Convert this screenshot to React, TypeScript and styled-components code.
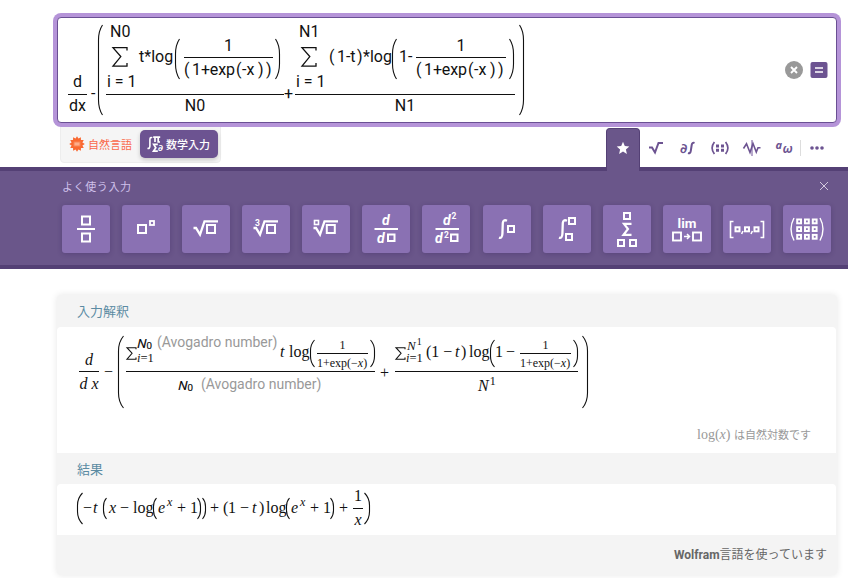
import React from "react";
import styled, { createGlobalStyle, css } from "styled-components";

const GlobalStyle = createGlobalStyle`
  * { box-sizing: border-box; }
  html, body { margin: 0; padding: 0; background: #fff; overflow: hidden; }
  body { font-family: Roboto, "Noto Sans CJK JP", sans-serif; color: #111; }
`;

const Page = styled.main`
  width: 848px;
  height: 578px;
  overflow: hidden;
  display: flex;
  flex-direction: column;
`;

/* ---------- query field ---------- */

const QueryBox = styled.section`
  position: relative;
  z-index: 2;
  flex: none;
  display: flex;
  justify-content: space-between;
  width: 780px;
  height: 106px;
  margin: 17px 0 0 57px;
  padding-right: 8px;
  border: 1px solid #6a4f93;
  border-radius: 4px;
  background: #fff;
  box-shadow: 0 0 0 4px #b594d8;
`;

const QueryMath = styled.div`
  display: flex;
  align-items: flex-start;
  padding: 3px 0 0 10px;
  font: 16px/20px Roboto, sans-serif;
`;

const QueryActions = styled.div`
  display: flex;
  align-items: center;
  gap: 7px;
`;

/* ---------- formula building blocks ---------- */

const Line = styled.div`
  display: flex;
  align-items: flex-start;
`;

const Stack = styled.div<{ $w?: number; $top?: number; $left?: number }>`
  flex: none;
  display: flex;
  flex-direction: column;
  width: ${(p) => (p.$w === undefined ? "auto" : `${p.$w}px`)};
  margin-top: ${(p) => p.$top ?? 0}px;
  margin-left: ${(p) => p.$left ?? 0}px;
`;

const Term = styled.span<{
  $w?: number;
  $top?: number;
  $left?: number;
  $size?: number;
  $italic?: boolean;
  $center?: boolean;
  $gap?: number;
}>`
  flex: none;
  display: block;
  white-space: pre;
  height: 20px;
  width: ${(p) => (p.$w === undefined ? "auto" : `${p.$w}px`)};
  margin-top: ${(p) => p.$top ?? 0}px;
  margin-left: ${(p) => p.$left ?? 0}px;
  letter-spacing: ${(p) => p.$gap ?? 0}px;
  ${(p) => p.$size && css`font-size: ${p.$size}px;`}
  ${(p) => p.$italic && css`font-style: italic;`}
  ${(p) => p.$center && css`text-align: center;`}
`;

const Bar = styled.div<{ $top?: number }>`
  height: 1px;
  margin-top: ${(p) => p.$top ?? 0}px;
  background: #111;
`;

const Unit = styled.span<{ $w: number; $top?: number; $left?: number }>`
  flex: none;
  white-space: pre;
  width: ${(p) => p.$w}px;
  height: 20px;
  margin-top: ${(p) => p.$top ?? 0}px;
  margin-left: ${(p) => p.$left ?? 0}px;
  font: 14px/20px Roboto, sans-serif;
  color: #999;
`;

const Constant = styled.span<{ $left?: number; $top?: number; $w: number }>`
  flex: none;
  display: flex;
  width: ${(p) => p.$w}px;
  height: 20px;
  margin-left: ${(p) => p.$left ?? 0}px;
  margin-top: ${(p) => p.$top ?? 0}px;
  font: italic 500 13.5px/20px "Open Sans", sans-serif;
  color: #000;
  -webkit-text-stroke: 0.2px #000;
`;

const ConstantSub = styled.span`
  font-size: 9.5px;
  font-style: normal;
  line-height: 26px;
`;

const SvgBlock = styled.svg<{ $top?: number; $left?: number }>`
  display: block;
  flex: none;
  overflow: visible;
  margin-top: ${(p) => p.$top ?? 0}px;
  margin-left: ${(p) => p.$left ?? 0}px;
`;

type ParenProps = { h: number; w?: number; top?: number; left?: number; close?: boolean };

function Paren({ h, w = 5, top, left, close }: ParenProps) {
  const c = Math.min(h * 0.4, 15);
  const d = close
    ? `M0.5 0 Q${w - 0.5} ${c * 0.4} ${w - 0.5} ${c} V${h - c} Q${w - 0.5} ${h - c * 0.4} 0.5 ${h}`
    : `M${w - 0.5} 0 Q0.5 ${c * 0.4} 0.5 ${c} V${h - c} Q0.5 ${h - c * 0.4} ${w - 0.5} ${h}`;
  return (
    <SvgBlock $top={top} $left={left} width={w} height={h}>
      <path d={d} fill="none" stroke="#111" strokeWidth="1.1" />
    </SvgBlock>
  );
}

function Sigma({ w, h, top, left, s = 1.3 }: { w: number; h: number; top?: number; left?: number; s?: number }) {
  return (
    <SvgBlock $top={top} $left={left} width={w} height={h}>
      <path
        d={`M${w - 1} ${h * 0.18} V0.7 H1 L${w * 0.55} ${h * 0.48} L1 ${h - 0.8} H${w - 1} V${h * 0.8}`}
        fill="none"
        stroke="#111"
        strokeWidth={s}
      />
    </SvgBlock>
  );
}

function SumColumn({ top, w }: { top: string; w: number }) {
  return (
    <Stack $w={w}>
      <Term $left={4} $top={1}>{top}</Term>
      <Sigma w={16} h={20} top={5} left={6} />
      <Term $left={1} $top={5}>i = 1</Term>
    </Stack>
  );
}

function Exponential({ w }: { w: number }) {
  return (
    <Stack $w={w} $top={15}>
      <Term $center>1</Term>
      <Bar $top={1} />
      <Line>
        <Term $w={8} $top={2}>(</Term>
        <Term $w={44} $top={2} $gap={-0.1}>1+exp</Term>
        <Term $w={6} $top={2}>(</Term>
        <Term $w={16} $top={2}>-x</Term>
        <Term $w={8} $top={2}>)</Term>
        <Term $top={2}>)</Term>
      </Line>
    </Stack>
  );
}

function QueryFormula() {
  return (
    <QueryMath>
      <Stack $w={19} $top={51}>
        <Term $center>d</Term>
        <Bar $top={2} />
        <Term $center $top={1}>dx</Term>
      </Stack>
      <Term $w={11} $left={4} $top={63}>-</Term>
      <Paren h={90} w={5} top={4} left={-4} />
      <Stack $w={178} $left={3}>
        <Line>
          <SumColumn top="N0" w={33} />
          <Term $w={36} $top={26}>t*log</Term>
          <Paren h={40} top={18} />
          <Stack $w={4} />
          <Exponential w={89} />
          <Paren h={40} top={18} left={2} close />
        </Line>
        <Bar $top={2} />
        <Term $center $top={1}>N0</Term>
      </Stack>
      <Term $w={11} $top={63}>+</Term>
      <Stack $w={220}>
        <Line>
          <SumColumn top="N1" w={34} />
          <Term $w={8} $top={26}>(</Term>
          <Term $w={20} $top={26} $gap={-0.1}>1-t</Term>
          <Term $w={6} $top={26}>)</Term>
          <Term $w={29} $top={26}>*log</Term>
          <Paren h={40} top={18} />
          <Term $w={17} $left={2} $top={26}>1-</Term>
          <Exponential w={90} />
          <Paren h={40} top={18} left={3} close />
        </Line>
        <Bar $top={2} />
        <Term $center $top={1}>N1</Term>
      </Stack>
      <Paren h={90} w={5} top={4} left={4} close />
    </QueryMath>
  );
}

/* ---------- mode switch and palette tabs ---------- */

const ControlRow = styled.div`
  flex: none;
  display: flex;
  justify-content: space-between;
  width: 848px;
  height: 44px;
  padding-left: 60px;
`;

const ModeSwitch = styled.div`
  display: flex;
  align-items: center;
  width: 161px;
  height: 40px;
  padding: 1px 2px 0 8px;
  background: #f5f5f5;
  border: 1px solid #ededed;
  border-radius: 4px;
  font-size: 11px;
`;

const NaturalMode = styled.button`
  display: flex;
  align-items: center;
  gap: 3px;
  width: 71px;
  padding: 0;
  border: 0;
  background: none;
  color: #fa694b;
  font: 11px "Noto Sans CJK JP", sans-serif;
  white-space: nowrap;
`;

const MathMode = styled.button`
  flex: none;
  display: flex;
  align-items: center;
  gap: 2px;
  width: 78px;
  height: 28px;
  padding: 0 0 0 7px;
  border: 0;
  border-radius: 5px;
  background: #6c5391;
  color: #fff;
  font: 500 11px "Noto Sans CJK JP", sans-serif;
  white-space: nowrap;
  box-shadow: 0 2px 4px rgba(0, 0, 0, 0.18);
`;

const Tabs = styled.nav`
  display: flex;
  align-items: flex-start;
  width: 242px;
  padding-top: 5px;
`;

const Tab = styled.button<{ $active?: boolean }>`
  display: flex;
  align-items: center;
  justify-content: center;
  width: 32px;
  height: 40px;
  padding: 0;
  border: 0;
  background: none;
  ${(p) =>
    p.$active &&
    css`
      position: relative;
      z-index: 1;
      width: 34px;
      height: 43px;
      padding-bottom: 5px;
      background: #6a568a;
      border: 1px solid #544075;
      border-bottom: 0;
      border-radius: 4px 4px 0 0;
    `}
`;

const TabDivider = styled.span`
  width: 1px;
  height: 16px;
  margin-top: 12px;
  background: #ddd;
`;

/* ---------- palette ---------- */

const Palette = styled.section`
  flex: none;
  width: 848px;
  height: 102px;
  padding: 0 17px 0 62px;
  background: #6a568a;
  border-top: 4px solid #544075;
  border-bottom: 4px solid #544075;
`;

const PaletteHead = styled.div`
  display: flex;
  align-items: center;
  justify-content: space-between;
  height: 34px;
  padding: 0 2px 4px 0;
  color: #cfc0ea;
  font: 11px "Noto Sans CJK JP", sans-serif;
  letter-spacing: 0.6px;
`;

const PaletteKeys = styled.div`
  display: flex;
  justify-content: space-between;
`;

const Key = styled.button`
  width: 48px;
  height: 48px;
  padding: 0;
  border: 0;
  border-radius: 3px;
  background: #8a71b3;
  box-shadow: 0 1px 5px rgba(40, 20, 80, 0.25);
`;

const KeyArt = styled.svg`
  display: block;
  width: 48px;
  height: 48px;
  fill: none;
  stroke: #fff;
  stroke-width: 2;
  text {
    fill: #fff;
    stroke: none;
    font-family: Roboto, sans-serif;
    font-weight: 700;
  }
`;

function Slot({ x, y, s = 8, w = 2 }: { x: number; y: number; s?: number; w?: number }) {
  return <rect x={x} y={y} width={s} height={s} strokeWidth={w} />;
}

const INTEGRAL = "M24 15.8 Q20.3 14 19.8 18 L19.4 29 Q19 33.8 16 32.6";
const RADICAL = "M11.5 23H14L18 29.5L22.5 16.3H36";

const keys: { name: string; art: React.ReactNode }[] = [
  { name: "fraction", art: <><Slot x={20} y={11.5} /><path d="M15 24H33" /><Slot x={20} y={28.5} /></> },
  { name: "power", art: <><Slot x={16} y={20} /><Slot x={28} y={16} s={4} w={1.8} /></> },
  { name: "square root", art: <><path d={RADICAL} strokeWidth="2.3" /><Slot x={25} y={20} /></> },
  { name: "cube root", art: <><path d={RADICAL} strokeWidth="2.3" /><Slot x={25} y={20} /><text x="13" y="20.5" fontSize="8.5">3</text></> },
  { name: "nth root", art: <><path d={RADICAL} strokeWidth="2.3" /><Slot x={24.8} y={20} /><Slot x={12.5} y={15.5} s={4} w={1.6} /></> },
  { name: "derivative", art: <><text x="20" y="19.8" fontSize="14" fontStyle="italic">d</text><path d="M12.5 24H36" /><text x="15" y="38.3" fontSize="14" fontStyle="italic">d</text><Slot x={26} y={29.5} s={6.5} /></> },
  { name: "second derivative", art: <><text x="21" y="19.8" fontSize="14" fontStyle="italic">d</text><text x="29.5" y="14" fontSize="8.5">2</text><path d="M13.5 24H37" /><text x="13" y="38.3" fontSize="14" fontStyle="italic">d</text><text x="22" y="32.5" fontSize="8.5">2</text><Slot x={29} y={29.5} s={6.5} /></> },
  { name: "integral", art: <><path d={INTEGRAL} strokeWidth="2.3" /><Slot x={25} y={21} s={6} /></> },
  { name: "definite integral", art: <><path d={INTEGRAL} strokeWidth="2.3" /><Slot x={26} y={13} s={6} /><Slot x={23} y={29} s={6} /></> },
  { name: "sum", art: <><Slot x={21} y={8} s={6} /><path d="M28.5 18.8H21L25 24L20.5 29.8H28.5" strokeWidth="2.2" /><Slot x={15} y={35} s={6} /><Slot x={27} y={35} s={6} /></> },
  { name: "limit", art: <><text x="14.6" y="22.5" fontSize="13.5">lim</text><Slot x={10} y={27.5} s={8} w={1.9} /><path d="M21 31.5H26M24 29L26.5 31.5L24 34" strokeWidth="1.5" /><Slot x={30} y={27.5} s={8} w={1.9} /></> },
  { name: "list", art: <><path d="M10.5 16.5H7.5V32.5H10.5M37.5 16.5H40.5V32.5H37.5" strokeWidth="1.6" />{[12.5, 22, 31.5].map((x) => <Slot key={x} x={x} y={22.3} s={4} />)}<path d="M20 26L18.6 29M29.4 26L28 29" strokeWidth="1.6" /></> },
  { name: "matrix", art: <><path d="M11 13Q5 24 11 35.5M37 13Q43 24 37 35.5" strokeWidth="1.4" />{[14.2, 22, 29.8].flatMap((x) => [14.5, 22.2, 29.9].map((y) => <Slot key={`${x}-${y}`} x={x} y={y} s={3.8} />))}</> },
];

/* ---------- results ---------- */

const Results = styled.section`
  flex: none;
  width: 780px;
  height: 280px;
  margin: 26px 0 0 57px;
  border-radius: 4px;
  background: #f4f4f4;
  box-shadow: 0 0 7px rgba(0, 0, 0, 0.1);
`;

const PodTitle = styled.h2<{ $h: number }>`
  display: flex;
  align-items: center;
  height: ${(p) => p.$h}px;
  margin: 0;
  padding: 0 0 0 20px;
  color: #5b8ba3;
  font: 400 13px/20px "Noto Sans CJK JP", sans-serif;
`;

const PodBody = styled.div<{ $h: number }>`
  display: flex;
  flex-direction: column;
  justify-content: space-between;
  height: ${(p) => p.$h}px;
  width: 779px;
  background: #fff;
  border-radius: 4px 4px 0 0;
`;

const SerifMath = styled.div`
  display: flex;
  align-items: flex-start;
  padding-left: 20px;
  font: 16px/20px "Liberation Serif", serif;
`;

const Footnote = styled.p`
  margin: 0 25px 9px auto;
  color: #999;
  font: 11px/18px "Noto Sans CJK JP", sans-serif;
  white-space: pre;
`;

const FootnoteMath = styled.span`
  font: 14px/18px "Liberation Serif", serif;
`;

const Credit = styled.footer`
  display: flex;
  justify-content: flex-end;
  align-items: center;
  height: 40px;
  padding: 0 10px 0 0;
  color: #666;
  font: 12px/20px Roboto, "Noto Sans CJK JP", sans-serif;
`;

function SmallExponential({ w, left }: { w: number; left?: number }) {
  return (
    <Stack $w={w} $left={left} $top={8}>
      <Term $center $size={12}>1</Term>
      <Bar $top={-2} />
      <Line>
        <Term $size={12} $top={-1}>1+exp(−</Term>
        <Term $size={12} $top={-1} $italic>x</Term>
        <Term $size={12} $top={-1}>)</Term>
      </Line>
    </Stack>
  );
}

function Interpretation() {
  return (
    <SerifMath>
      <Stack $w={20} $top={23} $left={2}>
        <Term $center $italic>d</Term>
        <Bar $top={1} />
        <Term $center $italic $top={2}>d x</Term>
      </Stack>
      <Term $w={10} $left={5} $top={35}>−</Term>
      <Paren h={72} w={6} top={9} left={4} />
      <Stack $w={249} $left={2}>
        <Line>
          <Sigma w={11} h={13} top={20} s={1.1} />
          <Stack $w={20}>
            <Constant $w={20} $top={6}>N<ConstantSub>0</ConstantSub></Constant>
            <Line>
              <Term $italic $size={12.5} $top={-5}>i</Term>
              <Term $size={12.5} $top={-5}>=1</Term>
            </Line>
          </Stack>
          <Unit $w={123} $top={5}>(Avogadro number)</Unit>
          <Term $italic $w={9} $top={15}>t</Term>
          <Term $w={21} $top={15}>log</Term>
          <Paren h={27} top={13} />
          <SmallExponential w={51} left={2} />
          <Paren h={27} top={13} left={2} close />
        </Line>
        <Bar $top={-2} />
        <Line>
          <Constant $w={23} $left={52} $top={3}>N<ConstantSub>0</ConstantSub></Constant>
          <Unit $w={124} $top={2}>(Avogadro number)</Unit>
        </Line>
      </Stack>
      <Term $w={15} $left={5} $top={36}>+</Term>
      <Stack $w={183}>
        <Line>
          <Sigma w={11} h={13} top={20} s={1.1} />
          <Stack $w={20}>
            <Line>
              <Term $italic $size={13} $left={1} $top={9}>N</Term>
              <Term $size={10} $left={1} $top={5}>1</Term>
            </Line>
            <Line>
              <Term $italic $size={12.5} $top={-8}>i</Term>
              <Term $size={12.5} $top={-8}>=1</Term>
            </Line>
          </Stack>
          <Term $w={29} $top={15}>(1 −</Term>
          <Term $w={6} $top={15} $italic>t</Term>
          <Term $w={8} $top={15}>)</Term>
          <Term $w={21} $top={15}>log</Term>
          <Paren h={27} top={13} />
          <Term $w={11} $top={15}>1</Term>
          <Term $w={14} $top={15}>−</Term>
          <SmallExponential w={51} />
          <Paren h={27} top={13} left={2} close />
        </Line>
        <Bar $top={-2} />
        <Line>
          <Term $italic $left={83} $top={4}>N</Term>
          <Term $size={12} $left={1} $top={-1}>1</Term>
        </Line>
      </Stack>
      <Paren h={72} w={6} top={9} left={4} close />
    </SerifMath>
  );
}

type Token = [text: string, width: number, kind?: "italic" | "power" | "open" | "close"];

const resultTokens: Token[] = [
  ["−", 10], ["t", 10, "italic"], ["(", 6, "open"], ["x", 11, "italic"], ["−", 13], ["log", 20], ["(", 5, "open"],
  ["e", 9, "italic"], ["x", 10, "power"], ["+", 13], ["1", 7], [")", 5, "close"], [")", 8, "close"], ["+", 13],
  ["(", 5], ["1", 12], ["−", 12], ["t", 7, "italic"], [")", 7], ["log", 20], ["(", 5, "open"],
  ["e", 9, "italic"], ["x", 10, "power"], ["+", 13], ["1", 7], [")", 9, "close"], ["+", 14],
];

function ResultFormula() {
  return (
    <SerifMath>
      <Paren h={31} w={6} top={9} />
      {resultTokens.map(([text, width, kind], i) =>
        kind === "open" || kind === "close" ? (
          <Stack key={i} $w={width} $top={14}>
            <Paren h={21} w={4} close={kind === "close"} />
          </Stack>
        ) : (
          <Term
            key={i}
            $w={width}
            $italic={kind !== undefined}
            $size={kind === "power" ? 12 : undefined}
            $top={kind === "power" ? 8 : 14}
          >
            {text}
          </Term>
        )
      )}
      <Stack $w={10} $top={2}>
        <Term $center>1</Term>
        <Bar $top={2} />
        <Term $center $italic $top={1}>x</Term>
      </Stack>
      <Paren h={31} w={6} top={9} left={1} close />
    </SerifMath>
  );
}

/* ---------- icons ---------- */

const spikes = Array.from({ length: 24 }, (_, i) => {
  const r = i % 2 ? 5.6 : 7.8;
  const a = (i * Math.PI) / 12;
  return `${8 + r * Math.sin(a)},${8 - r * Math.cos(a)}`;
}).join(" ");

const BurstIcon = () => (
  <SvgBlock width="16" height="16">
    <polygon points={spikes} fill="#f96932" />
    <rect x="5" y="6" width="6" height="4" fill="#fcae8c" stroke="#fb8352" />
  </SvgBlock>
);

const IconText = styled.text`
  font-family: "Noto Sans", "DejaVu Sans", sans-serif;
  font-weight: 700;
  fill: currentColor;
`;

const PurpleArt = styled.svg`
  width: 24px;
  height: 20px;
  overflow: visible;
  color: #6c5391;
  fill: none;
  stroke: #6c5391;
  stroke-width: 2;
  text { stroke: none; }
`;

const MathModeIcon = () => (
  <SvgBlock width="17" height="18">
    <path d="M5.2 2.8Q3 1.6 2.9 4.8V11Q2.8 14 0.5 13.2" fill="none" stroke="#fff" strokeWidth="1.6" />
    <path d="M6.2 2.2H13.2M8 2.2V7M11.2 2.2V7H13" fill="none" stroke="#fff" strokeWidth="1.7" />
    <path d="M10.8 9.4H6.7L8.8 12.7L6.5 16.2H10.8" fill="none" stroke="#fff" strokeWidth="1.7" />
    <IconText x="11" y="15.5" fontSize="9">∂</IconText>
  </SvgBlock>
);

export default function App() {
  return (
    <>
      <GlobalStyle />
      <Page>
        <QueryBox>
          <QueryFormula />
          <QueryActions>
            <SvgBlock width="18" height="18">
              <circle cx="9" cy="9" r="9" fill="#999" />
              <path d="M6 6L12 12M12 6L6 12" stroke="#fff" strokeWidth="1.9" />
            </SvgBlock>
            <SvgBlock width="18" height="18">
              <rect x="0.5" y="1" width="17" height="16" rx="2" fill="#6c5391" />
              <path d="M5 7H13M5 11H13" stroke="#fff" strokeWidth="1.5" />
            </SvgBlock>
          </QueryActions>
        </QueryBox>

        <ControlRow>
          <ModeSwitch>
            <NaturalMode><BurstIcon />自然言語</NaturalMode>
            <MathMode><MathModeIcon />数学入力</MathMode>
          </ModeSwitch>
          <Tabs>
            <Tab $active aria-label="favorites">
              <svg width="14" height="14" viewBox="0 0 14 14">
                <path d="M7 0.8L8.8 5.1L13.3 5.5L9.9 8.5L10.9 13L7 10.6L3.1 13L4.1 8.5L0.7 5.5L5.2 5.1Z" fill="#fff" />
              </svg>
            </Tab>
            <Tab aria-label="roots">
              <PurpleArt><path d="M5 9.5H8L11 14.5L14.5 5H19" /></PurpleArt>
            </Tab>
            <Tab aria-label="calculus">
              <PurpleArt>
                <IconText x="4" y="14.5" fontSize="13.5" fontStyle="italic">∂</IconText>
                <path d="M18.5 5Q16.2 4 15.7 7L14.8 12.8Q14.3 15.9 12 15" />
              </PurpleArt>
            </Tab>
            <Tab aria-label="matrices">
              <PurpleArt>
                <path d="M6.4 4Q1.8 10 6.4 16M17.6 4Q22.2 10 17.6 16" strokeWidth="1.7" />
                <path d="M8 8H11M13 8H16M8 12.2H11M13 12.2H16" strokeWidth="3" />
              </PurpleArt>
            </Tab>
            <Tab aria-label="functions">
              <PurpleArt>
                <path d="M12 2V18" stroke="#b7a9cc" />
                <path d="M3.5 10.5L6.5 5.8L10 14.5L13 5.5L16.3 14L18 9.8H20.5" strokeWidth="1.6" />
              </PurpleArt>
            </Tab>
            <Tab aria-label="greek letters">
              <PurpleArt>
                <IconText x="3.5" y="11" fontSize="11" fontStyle="italic">a</IconText>
                <IconText x="10.5" y="14.5" fontSize="12" fontStyle="italic">ω</IconText>
              </PurpleArt>
            </Tab>
            <TabDivider />
            <Tab aria-label="more">
              <PurpleArt>
                {[7, 12, 17].map((x) => <circle key={x} cx={x} cy="10" r="1.8" fill="currentColor" stroke="none" />)}
              </PurpleArt>
            </Tab>
          </Tabs>
        </ControlRow>

        <Palette>
          <PaletteHead>
            よく使う入力
            <svg width="10" height="10"><path d="M1 1L9 9M9 1L1 9" stroke="#d4cade" strokeWidth="1" /></svg>
          </PaletteHead>
          <PaletteKeys>
            {keys.map((key) => (
              <Key key={key.name} aria-label={key.name}>
                <KeyArt>{key.art}</KeyArt>
              </Key>
            ))}
          </PaletteKeys>
        </Palette>

        <Results>
          <PodTitle $h={32}>入力解釈</PodTitle>
          <PodBody $h={126}>
            <Interpretation />
            <Footnote><FootnoteMath>log(<i>x</i>) </FootnoteMath>は自然対数です</Footnote>
          </PodBody>
          <PodTitle $h={31}>結果</PodTitle>
          <PodBody $h={51}>
            <ResultFormula />
          </PodBody>
          <Credit><b>Wolfram</b>言語を使っています</Credit>
        </Results>
      </Page>
    </>
  );
}
